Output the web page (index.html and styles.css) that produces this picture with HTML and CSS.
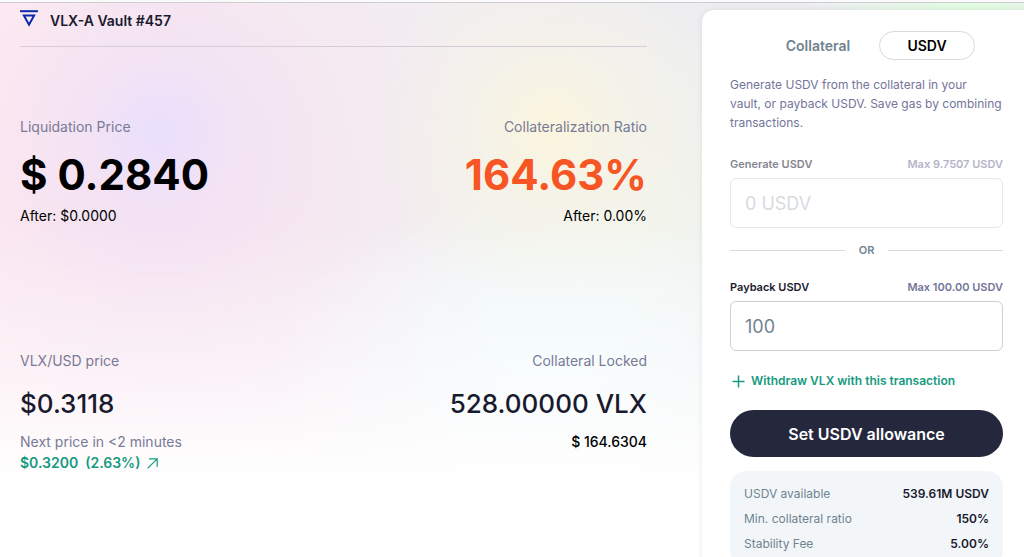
FILE: index.html
```html
<!DOCTYPE html>
<html lang="en">
<head>
    <meta charset="UTF-8">
    <meta name="viewport" content="width=device-width, initial-scale=1.0">
    <title>VLX-A Vault #457</title>
    <link rel="stylesheet" href="styles.css">
</head>
<body>
    <div class="page">
        <main class="vault">
            <header class="vault-header">
                <svg class="logo" width="18" height="17" viewBox="0 0 18 17" fill="none" stroke="#0a2aa8" stroke-width="2">
                    <path d="M0 1.2h18"/>
                    <path d="M3.9 5.6h10.2L9 14.8z"/>
                </svg>
                <h1>VLX-A Vault #457</h1>
            </header>
            <div class="stats">
                <section class="stat">
                    <h2>Liquidation Price</h2>
                    <p class="big">$ 0.2840</p>
                    <p class="after">After: $0.0000</p>
                </section>
                <section class="stat right">
                    <h2>Collateralization Ratio</h2>
                    <p class="big danger">164.63%</p>
                    <p class="after">After: 0.00%</p>
                </section>
                <section class="stat">
                    <h2>VLX/USD price</h2>
                    <p class="value">$0.3118</p>
                    <p class="next">Next price in &lt;2 minutes</p>
                    <p class="change">
                        <span>$0.3200</span>
                        <span>(2.63%)</span>
                        <svg width="11" height="11" viewBox="0 0 11 11" fill="none" stroke="currentColor" stroke-width="1.2">
                            <path d="M0.6 10.4L10.2 0.8M2 0.8h8.2V9"/>
                        </svg>
                    </p>
                </section>
                <section class="stat right">
                    <h2>Collateral Locked</h2>
                    <p class="value">528.00000 VLX</p>
                    <p class="usd">$ 164.6304</p>
                </section>
            </div>
        </main>

        <aside class="card">
            <div class="tabs">
                <button type="button" class="tab">Collateral</button>
                <button type="button" class="tab active">USDV</button>
            </div>
            <p class="intro">Generate USDV from the collateral in your<br>vault, or payback USDV. Save gas by combining transactions.</p>
            <form>
                <div class="field muted">
                    <div class="field-top">
                        <label for="generate">Generate USDV</label>
                        <span>Max 9.7507 USDV</span>
                    </div>
                    <input type="text" id="generate" placeholder="0 USDV" disabled>
                </div>
                <div class="or">OR</div>
                <div class="field">
                    <div class="field-top">
                        <label for="payback">Payback USDV</label>
                        <span>Max 100.00 USDV</span>
                    </div>
                    <input type="text" id="payback" value="100">
                </div>
                <a href="#" class="withdraw">
                    <svg width="13" height="13" viewBox="0 0 13 13" fill="none" stroke="currentColor" stroke-width="1.5">
                        <path d="M6.5 0.5v12M0.5 6.5h12"/>
                    </svg>
                    Withdraw VLX with this transaction
                </a>
                <button type="submit" class="submit">Set USDV allowance</button>
            </form>
            <dl class="info">
                <div><dt>USDV available</dt><dd>539.61M USDV</dd></div>
                <div><dt>Min. collateral ratio</dt><dd>150%</dd></div>
                <div><dt>Stability Fee</dt><dd>5.00%</dd></div>
            </dl>
        </aside>
    </div>
</body>
</html>
```
FILE: styles.css
```css
* {
    box-sizing: border-box;
}
html {
    overflow-x: hidden;
    scrollbar-width: none;
}
body, h1, h2, p, dl, dd {
    margin: 0;
}
body {
    font-family: Inter, "Liberation Sans", sans-serif;
    font-size: 14px;
    color: #000;
    background-color: #fff;
    border-top: 2px solid #fafafa;
}
button, input {
    font-family: inherit;
}
.page {
    display: grid;
    grid-template-columns: 1fr 322px;
    gap: 55px;
    padding-left: 20px;
    border-top: 1px solid #cfcdd4;
    /* soft colour spots, fading to white at the bottom */
    background:
        linear-gradient(to bottom, rgba(255, 255, 255, 0) 220px, rgba(255, 255, 255, 0.4) 350px, #fff 480px),
        radial-gradient(circle at 160px 130px, rgba(232, 222, 254, 0.9), rgba(238, 224, 248, 0.4) 80px, rgba(244, 226, 242, 0) 180px),
        radial-gradient(circle at 552px 125px, rgba(253, 246, 220, 0.9), rgba(248, 244, 228, 0.5) 80px, rgba(244, 242, 236, 0) 180px),
        radial-gradient(circle at 970px 0, #e0fce0, rgba(224, 252, 224, 0) 160px),
        radial-gradient(ellipse 280px 170px at 550px 360px, #f2fcff, rgba(242, 252, 255, 0)),
        radial-gradient(ellipse 330px 480px at 160px 240px, #f6e2f0, rgba(248, 230, 240, 0)),
        radial-gradient(ellipse 300px 240px at 640px 230px, #f1f4ec, rgba(241, 244, 236, 0)),
        linear-gradient(to right, #ffebf0, #f3eef1 350px, #ededf1 690px);
}

/* left side */
.vault-header {
    display: flex;
    align-items: center;
    gap: 12px;
    height: 44px;
    padding-bottom: 8px;
    border-bottom: 1px solid #d6ccd8;
}
.logo {
    margin-bottom: 4px;
}
h1 {
    font-size: 14px;
    font-weight: 600;
    color: #1a1a2e;
}
.stats {
    display: grid;
    grid-template-columns: 1fr 1fr;
    grid-auto-rows: 234px;
    padding-top: 70px;
}
.right {
    text-align: right;
}
h2 {
    font-size: 14px;
    font-weight: 400;
    line-height: 20px;
    color: #787a96;
}
.big {
    font-size: 42px;
    font-weight: 700;
    line-height: 56px;
    margin: 10px 0 3px;
}
.danger {
    color: #f75524;
}
.after, .usd {
    line-height: 20px;
}
.value {
    font-size: 26px;
    font-weight: 500;
    line-height: 32px;
    margin: 17px 0 12px;
    color: #1a1a2e;
}
.next {
    line-height: 20px;
    color: #787a96;
}
.usd {
    font-weight: 500;
}
.change {
    display: flex;
    align-items: center;
    gap: 7px;
    line-height: 22px;
    font-weight: 600;
    color: #159a80;
}

/* right side */
.card {
    margin-top: 7px;
    padding: 21px 21px 24px 28px;
    background-color: #fff;
    border-radius: 12px 0 0 0;
    box-shadow: 0 0 6px rgba(0, 0, 0, 0.08);
}
.tabs {
    display: flex;
    justify-content: center;
    gap: 13px;
    padding-left: 12px;
}
.tab {
    width: 96px;
    height: 29px;
    padding: 0;
    border: 1px solid transparent;
    border-radius: 15px;
    background: none;
    font-size: 14px;
    font-weight: 600;
    color: #708390;
}
.active {
    border-color: #d3dbdf;
    color: #000;
}
.intro {
    margin: 15px 0 23px;
    font-size: 12px;
    line-height: 19px;
    color: #74759a;
}
.field-top {
    display: flex;
    justify-content: space-between;
    font-size: 11px;
    font-weight: 600;
    line-height: 18px;
    margin-bottom: 5px;
}
.field-top label {
    color: #1a1a2e;
}
.field-top span {
    color: #74759a;
}
.muted label {
    color: #85858f;
}
.muted .field-top span {
    color: #b5b5c8;
}
.field input {
    display: block;
    width: 100%;
    height: 50px;
    padding: 0 14px;
    border: 1px solid #ccd0d3;
    border-radius: 6px;
    background-color: #fff;
    font-size: 18px;
    color: #708390;
}
.muted input {
    border-color: #e6e8e9;
}
.muted input::placeholder {
    color: #d8dadf;
}
.or {
    display: flex;
    align-items: center;
    gap: 14px;
    margin: 13px 0 19px;
    font-size: 11px;
    font-weight: 600;
    line-height: 18px;
    color: #708390;
}
.or::before, .or::after {
    content: "";
    flex: 1;
    border-top: 1px solid #d3dbdf;
}
.withdraw {
    display: flex;
    align-items: center;
    gap: 6px;
    margin: 20px 0 19px;
    padding-left: 2px;
    font-size: 12px;
    font-weight: 600;
    line-height: 20px;
    color: #159a80;
    text-decoration: none;
}
.submit {
    display: block;
    width: 100%;
    height: 47px;
    border: none;
    border-radius: 24px;
    background-color: #25273d;
    color: #fff;
    font-size: 16px;
    font-weight: 600;
}
.info {
    margin-top: 14px;
    padding: 10px 14px;
    border-radius: 16px;
    background-color: #f2f6f9;
    font-size: 12px;
    line-height: 25px;
}
.info div {
    display: flex;
    justify-content: space-between;
}
.info dt {
    color: #708390;
}
.info dd {
    font-weight: 600;
    color: #1a1a2e;
}
```
